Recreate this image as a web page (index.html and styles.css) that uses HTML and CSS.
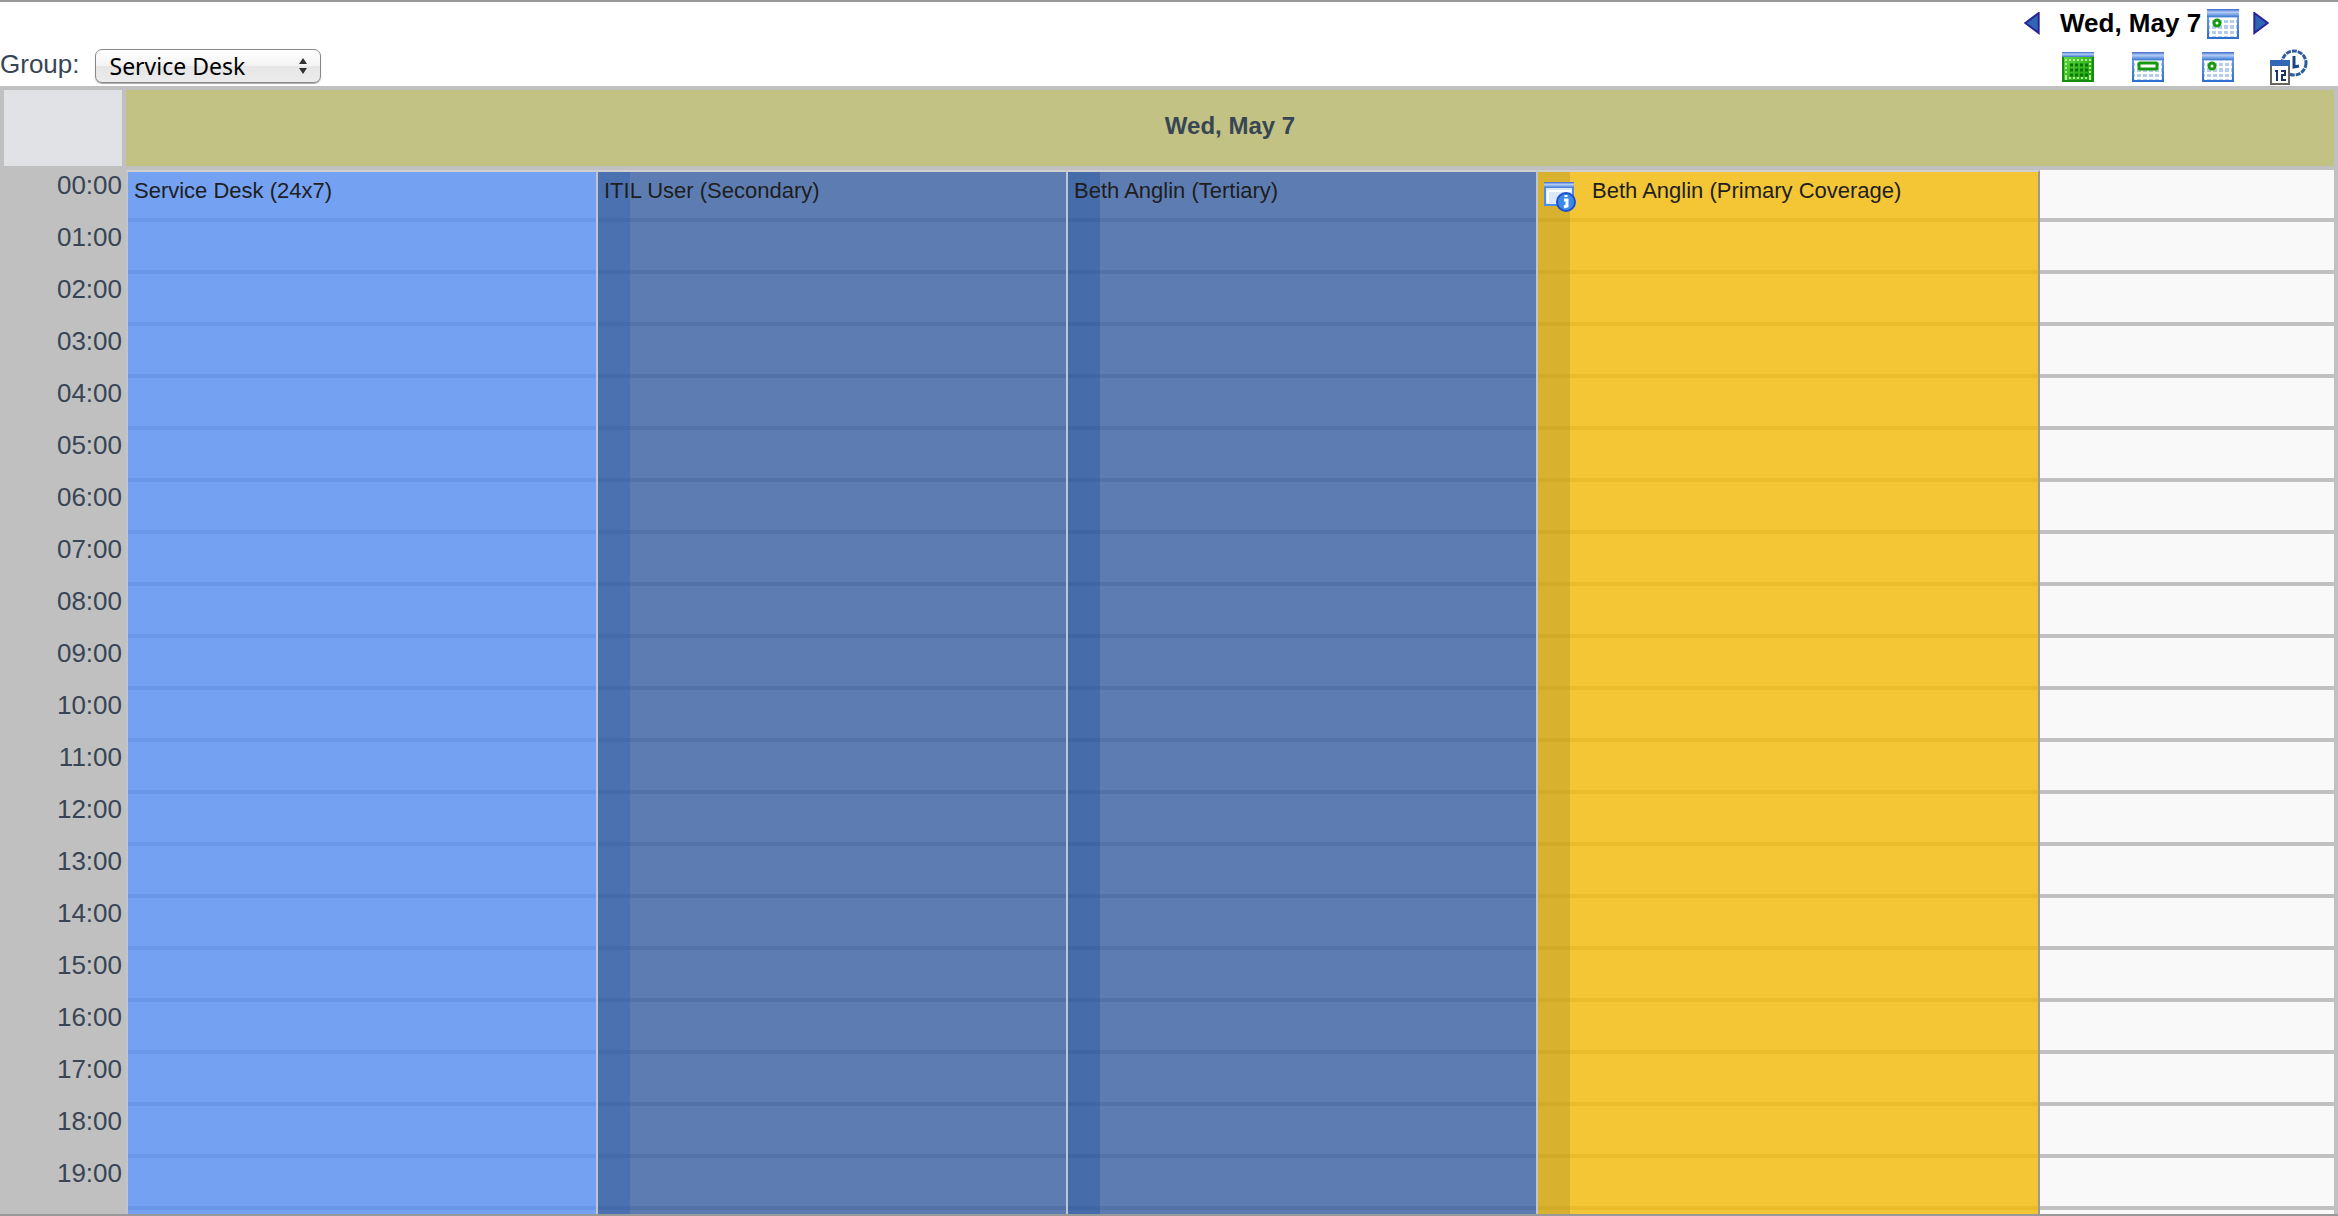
FILE: index.html
```
<!DOCTYPE html>
<html lang="en">
<head>
<meta charset="utf-8">
<title>On-call calendar</title>
<link rel="stylesheet" href="styles.css">
</head>
<body>
<svg class="defs" aria-hidden="true">
  <defs>
    <linearGradient id="bar" x1="0" y1="0" x2="0" y2="1"><stop offset="0" stop-color="#3c66cc"/><stop offset=".4" stop-color="#b4cef6"/><stop offset="1" stop-color="#3c78d0"/></linearGradient>
    <linearGradient id="frame" x1="0" y1="0" x2="0" y2="1"><stop offset="0" stop-color="#7aa6ea"/><stop offset="1" stop-color="#2f6fd0"/></linearGradient>
    <linearGradient id="green" x1="0" y1="0" x2="1" y2="1"><stop offset="0" stop-color="#66dc44"/><stop offset="1" stop-color="#15a008"/></linearGradient>
    <symbol id="cal" viewBox="0 0 32 30">
      <rect x="1" y="1" width="30" height="28" fill="#b4cdec" stroke="url(#frame)" stroke-width="2"/>
      <rect width="32" height="8" fill="url(#bar)"/>
      <path d="M2 10H30M2 15H30M2 21H30M2 26H30M4 9V28M10 9V28M16 9V28M22 9V28M28 9V28" stroke="#fff" stroke-width="2"/>
    </symbol>
    <symbol id="day" viewBox="0 0 32 30"><use href="#cal"/><circle cx="10" cy="14" r="3" fill="#fff" stroke="#189a10" stroke-width="3"/></symbol>
  </defs>
</svg>
<main class="frame">
  <header class="toolbar">
    <div class="group">
      <label for="group">Group:</label>
      <span class="picker">
        <select id="group"><option>Service Desk</option></select>
        <svg class="chevrons" viewBox="0 0 8 16" aria-hidden="true"><path d="M0 6L4 0L8 6ZM0 10L4 16L8 10Z" fill="#333"/></svg>
      </span>
    </div>
    <nav class="nav">
      <div class="dates">
        <button class="arrow" aria-label="Previous day"><svg viewBox="0 0 16 24"><path d="M15 1V22L1 11.500Z" fill="#2f66b4" stroke="#2a2298" stroke-width="2"/></svg></button>
        <strong>Wed, May 7</strong>
        <button class="icon" aria-label="Pick a date"><svg viewBox="0 0 32 30"><use href="#day"/></svg></button>
        <button class="arrow next" aria-label="Next day"><svg viewBox="0 0 16 24"><path d="M1 1V22L15 11.500Z" fill="#2f66b4" stroke="#2a2298" stroke-width="2"/></svg></button>
      </div>
      <div class="views">
        <button class="icon" aria-label="Month view"><svg viewBox="0 0 32 30"><rect x="1" y="1" width="30" height="28" fill="url(#green)" stroke="#188c10" stroke-width="2"/><rect width="32" height="5" fill="url(#bar)"/><path d="M3 8H29M3 26H29M4 7V28M28 7V28" stroke="#b4f09c" stroke-width="2" stroke-dasharray="2 2"/><path d="M8 13H26M8 18H26M8 23H26" stroke="#0b7404" stroke-width="3" stroke-dasharray="3 2"/></svg></button>
        <button class="icon" aria-label="Week view"><svg viewBox="0 0 32 30"><use href="#cal"/><rect x="7" y="11" width="18" height="6" rx="1" fill="#fff" stroke="#189a10" stroke-width="3"/></svg></button>
        <button class="icon" aria-label="Day view"><svg viewBox="0 0 32 30"><use href="#day"/></svg></button>
        <button class="icon wide" aria-label="Timeline view"><svg viewBox="0 0 38 36"><circle cx="24" cy="14" r="12" fill="#fff" stroke="#2c5c9c" stroke-width="3" stroke-dasharray="5 1"/><path d="M24 7V18L29 17" fill="none" stroke="#1c4484" stroke-width="3"/><rect x="1" y="12" width="18" height="23" fill="#fff" stroke="#66645c" stroke-width="2"/><rect y="11" width="20" height="6" fill="#3468b4"/><path d="M5 22H7V32M11 22H15V26H12V31H16" fill="none" stroke="#1c3468" stroke-width="2"/></svg></button>
      </div>
    </nav>
  </header>
  <section class="calendar">
    <table>
      <thead><tr><td class="corner"></td><th scope="col">Wed, May 7</th></tr></thead>
      <tbody>
        <tr><th scope="row">00:00</th><td></td></tr>
        <tr><th scope="row">01:00</th><td></td></tr>
        <tr><th scope="row">02:00</th><td></td></tr>
        <tr><th scope="row">03:00</th><td></td></tr>
        <tr><th scope="row">04:00</th><td></td></tr>
        <tr><th scope="row">05:00</th><td></td></tr>
        <tr><th scope="row">06:00</th><td></td></tr>
        <tr><th scope="row">07:00</th><td></td></tr>
        <tr><th scope="row">08:00</th><td></td></tr>
        <tr><th scope="row">09:00</th><td></td></tr>
        <tr><th scope="row">10:00</th><td></td></tr>
        <tr><th scope="row">11:00</th><td></td></tr>
        <tr><th scope="row">12:00</th><td></td></tr>
        <tr><th scope="row">13:00</th><td></td></tr>
        <tr><th scope="row">14:00</th><td></td></tr>
        <tr><th scope="row">15:00</th><td></td></tr>
        <tr><th scope="row">16:00</th><td></td></tr>
        <tr><th scope="row">17:00</th><td></td></tr>
        <tr><th scope="row">18:00</th><td></td></tr>
        <tr><th scope="row">19:00</th><td></td></tr>
        <tr><th></th><td></td></tr>
      </tbody>
    </table>
    <div class="events">
      <article class="event desk">Service Desk (24x7)</article>
      <article class="event backup">ITIL User (Secondary)</article>
      <article class="event backup third">Beth Anglin (Tertiary)</article>
      <article class="event primary">
        <svg class="info" viewBox="0 0 32 30" aria-hidden="true"><rect x="1" y="1" width="28" height="22" fill="#dbe8fa" stroke="#4c8cec" stroke-width="2"/><rect width="30" height="6" fill="url(#bar)"/><path d="M4 9H27M4 9V21" stroke="#fff" stroke-width="2"/><circle cx="22" cy="20" r="9" fill="#3c88ec" stroke="#1c50c8" stroke-width="2"/><path d="M20 18H23V24L20 25M22 13V15" fill="none" stroke="#fff" stroke-width="3"/></svg>
        Beth Anglin (Primary Coverage)
      </article>
    </div>
  </section>
</main>
</body>
</html>
```
FILE: styles.css
```
* { box-sizing: border-box; }
body { margin: 0; background: #fff; color: #384555; font: 26px/30px "Liberation Sans", Arial, sans-serif; }
.defs { position: absolute; width: 0; height: 0; }
.frame { height: 100vh; overflow: hidden; border-top: 2px solid #999; border-bottom: 2px solid #999; display: flex; flex-direction: column; }
.toolbar { flex: none; height: 84px; display: flex; justify-content: space-between; }
.group { display: flex; align-items: center; align-self: flex-end; gap: 15px; padding-bottom: 3px; }
.group label { padding-bottom: 4px; }
.picker { display: grid; align-items: center; }
.picker > * { grid-area: 1 / 1; }
select { appearance: none; width: 226px; height: 34px; padding: 0 14px; border: 1px solid #888; border-radius: 7px; background: linear-gradient(#fff, #f3f3f3 50%, #e6e6e6 51%, #ececec); box-shadow: 0 1px 1px #aaa; color: #000; font: 23px/30px "Noto Sans", sans-serif; }
.chevrons { width: 8px; height: 16px; justify-self: end; margin-right: 14px; pointer-events: none; }
.nav { width: 314px; padding-top: 4px; }
.dates { display: flex; align-items: center; height: 36px; color: #000; }
.dates strong { margin: 0 6px 0 20px; padding-bottom: 2px; }
button { padding: 0; border: 0; background: none; cursor: pointer; }
button svg { display: block; width: 100%; height: 100%; }
.arrow { width: 16px; height: 24px; padding-bottom: 1px; }
.next { margin-left: 14px; }
.icon { width: 32px; height: 30px; }
.wide { width: 38px; height: 36px; }
.views { display: flex; align-items: center; gap: 38px; padding-left: 38px; height: 50px; }
.views .wide { margin-left: -2px; }
.calendar { position: relative; flex: none; }
table { width: 100%; table-layout: fixed; border-collapse: separate; border-spacing: 0; background: #c0c0c0; }
thead th, thead td { height: 84px; padding: 0; border: 4px solid #c0c0c0; border-left-width: 0; }
thead th { padding-bottom: 4px; background: #c2c284; font-size: 24px; }
.corner { width: 126px; border-left-width: 4px; background: #e0e2e6; }
tbody th { height: 52px; padding: 0 4px 0 0; text-align: right; vertical-align: top; font-weight: normal; }
tbody td { padding: 0; background: #f9f9f9; border: solid #c0c0c0; border-width: 0 4px 4px 0; }
.events { position: absolute; inset: 84px 4px 0 126px; display: grid; grid-template-columns: 470fr 470fr 470fr 504fr 294fr; }
.event { --strip: transparent; padding: 5px 6px; border-top: 2px solid #d0d0d0; border-left: 2px solid #c0c4cc; background: linear-gradient(90deg, var(--strip) 32px, transparent 32px), var(--fill); background-clip: padding-box; color: #1e1e1e; font-size: 22px; line-height: 28px; white-space: nowrap; }
.desk { --fill: rgb(87 142 239 / .82); }
.backup { --fill: rgb(59 97 162 / .82); --strip: rgb(44 91 172 / .36); }
.third { --strip: rgb(30 76 154 / .36); }
.primary { --fill: rgb(243 187 10 / .82); --strip: rgb(166 142 36 / .36); display: flex; align-items: flex-start; gap: 16px; border-right: 2px solid #999; }
.info { flex: none; width: 32px; height: 30px; margin-top: 5px; }
```
